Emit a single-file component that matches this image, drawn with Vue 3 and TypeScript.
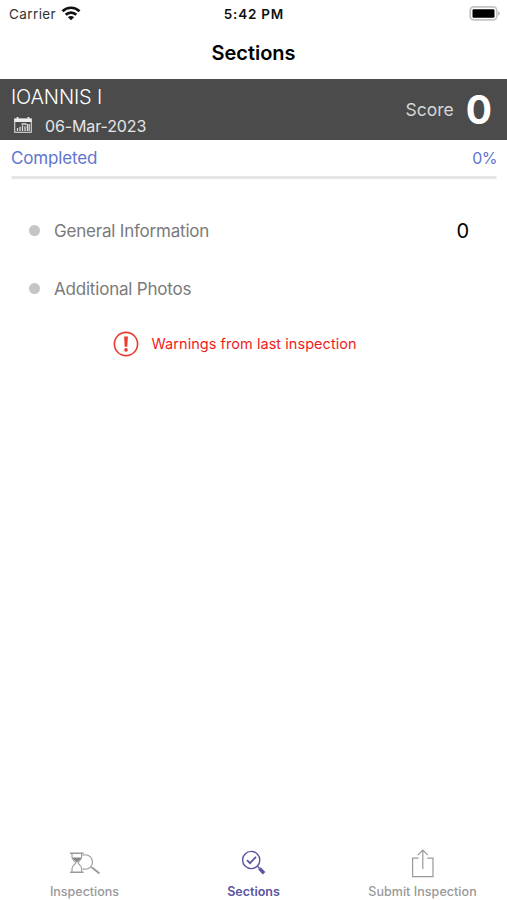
<script setup lang="ts">
interface Section {
  name: string
  score?: number
}

const sections: Section[] = [
  { name: 'General Information', score: 0 },
  { name: 'Additional Photos' },
]
const progress = 0
</script>

<template>
  <div class="screen">
    <div class="status">
      <div class="carrier">
        <span class="carrier-name">Carrier</span>
        <svg class="wifi" width="20" height="15" viewBox="0 0 20 15">
          <g fill="none" stroke="#111" stroke-width="2.7">
            <path d="M1.5 5.2C6.2.6 13.8.6 18.5 5.2" />
            <path d="M4.7 8.7c3-2.9 7.6-2.9 10.6 0" />
          </g>
          <path d="M10 14.2 6.9 11.3c1.7-1.6 4.5-1.6 6.2 0z" fill="#111" />
        </svg>
      </div>
      <span class="time">5:42 PM</span>
      <svg class="battery" width="32" height="15" viewBox="0 0 32 15">
        <rect x="1.2" y=".9" width="26.6" height="13" rx="3.6" fill="#fff" stroke="#c4c4c4" stroke-width="1.7" />
        <rect x="3.5" y="3.2" width="22" height="8.6" rx="1.2" fill="#000" />
        <path d="M29.3 5.2c2 .8 2 3.7 0 4.5z" fill="#aaa" />
      </svg>
    </div>

    <header class="nav"><h1>Sections</h1></header>

    <section class="summary">
      <div class="site">
        <div class="site-name">IOANNIS I</div>
        <div class="date-row">
          <svg width="18" height="16" viewBox="0 0 18 16">
            <rect x=".7" y="2" width="16.6" height="13.3" fill="none" stroke="#d8d8d8" stroke-width="1.1" />
            <path d="M.5 1.8h17v3.3H.5zM2.7 0h1.7v3H2.7zM13.6 0h1.7v3h-1.7z" fill="#eee" />
            <path d="M3.5 14v-3M6 14V9.7M8.5 14V8.3M11 14V9.2M13.4 14V7M15.2 14V7M7.5 7h5" stroke="#ddd" stroke-width="1.3" />
          </svg>
          <span class="date">06-Mar-2023</span>
        </div>
      </div>
      <div class="score">
        <span class="score-label">Score</span>
        <span class="score-value">0</span>
      </div>
    </section>

    <section class="completion">
      <div class="completion-row">
        <span class="completed">Completed</span>
        <span class="percent">{{ progress }}%</span>
      </div>
      <div class="track"><div class="fill" :style="{ width: progress + '%' }"></div></div>
    </section>

    <ul class="sections">
      <li v-for="item in sections" :key="item.name">
        <span class="dot"></span>
        <span class="name">{{ item.name }}</span>
        <span v-if="item.score !== undefined" class="value">{{ item.score }}</span>
      </li>
    </ul>

    <div class="warning">
      <svg width="26" height="26" viewBox="0 0 26 26">
        <circle cx="13" cy="13" r="11.6" fill="none" stroke="#ea3a2e" stroke-width="1.6" />
        <path d="M11.1 5.5h3.8l-.6 10.2h-2.6z" fill="#ea3a2e" />
        <circle cx="13" cy="18.9" r="1.8" fill="#ea3a2e" />
      </svg>
      <span>Warnings from last inspection</span>
    </div>

    <nav class="tabs">
      <div class="tab">
        <svg width="32" height="26" viewBox="0 0 32 26" fill="none" stroke="#999">
          <path d="M1 3.3h13.6M1 22.3h13.6" stroke-width="1.6" />
          <path d="M3 4v3.2c0 3 3.7 4.2 3.7 5.6S3 15.4 3 18.4v3.4M12.6 4v3.2c0 3-3.5 4.2-3.5 5.6s3.5 2.6 3.5 5.6v3.4" stroke-width="1.1" />
          <path d="M3.6 7.5h8.6c-.2 2.3-3.4 3.3-3.9 5.1h-.8c-.5-1.8-3.7-2.8-3.9-5.1z" fill="#888" stroke="none" />
          <path d="M13.4 5.2c1-.4 1.8-.5 2.8-.5a7.3 7.3 0 0 1 0 14.6c-1 0-1.8-.2-2.6-.5" stroke-width="1.1" />
          <path d="m21.6 16.6 2.2 1.7" stroke-width="1.1" />
          <path d="m23.6 18 6.3 5" stroke-width="1.9" stroke-linecap="round" />
        </svg>
        <span class="label">Inspections</span>
      </div>
      <div class="tab active">
        <svg width="26" height="26" viewBox="0 0 26 26" fill="none" stroke="#5b55a0">
          <circle cx="10.2" cy="10" r="8.6" stroke-width="1.4" />
          <path d="m6 10.2 3 3 6-6.4" stroke-width="1.8" />
          <path d="m16.5 16.3 2 2" stroke-width="1.5" />
          <path d="m18.4 18.4 4.7 4.9" stroke-width="3.4" />
        </svg>
        <span class="label current">Sections</span>
      </div>
      <div class="tab">
        <svg width="24" height="30" viewBox="0 0 24 30" fill="none" stroke="#999" stroke-width="1.2">
          <path d="M7.5 10.1H1.6v18.6h20.4V10.1h-5.7M11.8 21V2.3M6.8 7.1l5-5 5 5" />
        </svg>
        <span class="label submit">Submit Inspection</span>
      </div>
    </nav>
  </div>
</template>

<style>
body {
  margin: 0;
  background: #fff;
}
</style>

<style scoped>
.screen {
  width: 507px;
  height: 900px;
  display: flex;
  flex-direction: column;
  overflow: hidden;
  background: #fff;
  font-family: Inter, "Liberation Sans", sans-serif;
  white-space: nowrap;
}
.status {
  height: 27px;
  display: grid;
  grid-template-columns: 1fr auto 1fr;
  align-items: center;
  padding: 0 6px;
  box-sizing: border-box;
  font-size: 13.5px;
}
.carrier { display: flex; align-items: center; gap: 5px; padding-left: 3px; }
.carrier-name { color: #333; letter-spacing: 0.4px; }
.time { font-weight: 600; color: #111; letter-spacing: 0.75px; margin-right: -0.75px; }
.battery { justify-self: end; }
.nav {
  height: 52px;
  display: flex;
  justify-content: center;
  align-items: center;
}
h1 { margin: 0 0 1px; font-size: 20px; font-weight: 600; line-height: 24px; color: #000; }
.summary {
  height: 61px;
  display: flex;
  justify-content: space-between;
  background: #4b4b4b;
  padding: 0 15px 0 11px;
  box-sizing: border-box;
}
.site-name { margin-top: 6px; font-size: 20px; line-height: 24px; font-weight: 300; color: #fff; letter-spacing: -0.15px; }
.date-row { display: flex; align-items: center; gap: 13px; margin: 6px 0 0 3px; height: 20px; }
.date { padding-top: 1px; font-size: 16px; color: #e6e6e6; letter-spacing: -0.12px; }
.score { display: flex; align-items: center; gap: 12px; }
.score-label { font-size: 17.5px; color: #d5d5d5; }
.score-value { font-size: 39px; font-weight: 700; color: #fff; }
.completion { padding: 7px 10px 0 11px; }
.completion-row { display: flex; justify-content: space-between; line-height: 22px; font-size: 17px; color: #6075ce; height: 22px; }
.completed { letter-spacing: -0.15px; }
.percent { font-size: 16px; letter-spacing: -0.5px; }
.track { height: 3px; margin-top: 7px; border-radius: 2px; background: #e6e6e6; }
.fill { height: 100%; background: #6075ce; }
.sections { list-style: none; margin: 22px 0 0; padding: 0 38px 0 29px; }
li { display: flex; align-items: center; height: 58px; }
.dot { width: 11px; height: 11px; border-radius: 50%; background: #c5c5c5; margin-right: 14px; }
.name { padding-top: 1px; font-size: 17px; color: #7a7a7c; letter-spacing: -0.2px; }
.value { margin-left: auto; padding-top: 2px; font-size: 20px; color: #000; }
.warning { display: flex; align-items: center; gap: 12.5px; height: 26px; margin: 14px 0 0 113px; font-size: 14.5px; color: #f01c1c; letter-spacing: 0.05px; }
.warning span { padding-bottom: 1px; }
.tabs { display: grid; grid-template-columns: repeat(3, 1fr); height: 54px; margin-top: auto; }
.tab { display: flex; flex-direction: column; align-items: center; color: #999; }
.tab svg { height: 30px; margin-top: 2px; flex: none; }
.label { margin-top: 5px; line-height: 17px; font-size: 12.5px; font-weight: 500; }
.submit { letter-spacing: 0.05px; }
.active { color: #5b55a0; }
.current { font-weight: 600; }
</style>
